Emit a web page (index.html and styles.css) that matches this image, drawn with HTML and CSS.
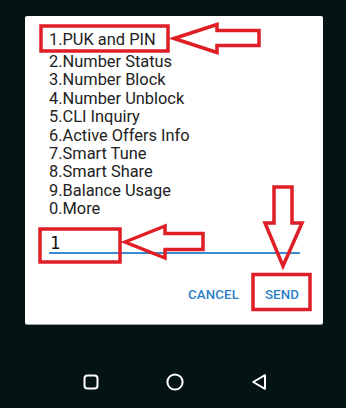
FILE: index.html
```html
<!DOCTYPE html>
<html>
<head>
<meta charset="utf-8">
<link rel="stylesheet" href="styles.css">
</head>
<body>
<div class="screen">
  <div class="dialog">
    <div class="menu">
      <div class="item first">1.PUK and PIN</div>
      <div class="item">2.Number Status</div>
      <div class="item">3.Number Block</div>
      <div class="item">4.Number Unblock</div>
      <div class="item">5.CLI Inquiry</div>
      <div class="item">6.Active Offers Info</div>
      <div class="item">7.Smart Tune</div>
      <div class="item">8.Smart Share</div>
      <div class="item">9.Balance Usage</div>
      <div class="item">0.More</div>
    </div>
    <div class="field"><span class="value">1</span></div>
    <div class="actions">
      <span class="btn">CANCEL</span>
      <span class="btn">SEND</span>
    </div>
  </div>
  <div class="navbar">
    <svg class="nav" width="16" height="16" viewBox="0 0 16 16"><rect x="1.5" y="1.5" width="13" height="13" rx="3" fill="none" stroke="#fff" stroke-width="2"/></svg>
    <svg class="nav" width="18" height="18" viewBox="0 0 18 18"><circle cx="9" cy="9" r="7.6" fill="none" stroke="#fff" stroke-width="2"/></svg>
    <svg class="nav" width="16" height="18" viewBox="0 0 16 18"><path d="M14 2.2 L2.2 9 L14 15.8 Z" fill="none" stroke="#fff" stroke-width="2" stroke-linejoin="round"/></svg>
  </div>
  <svg class="marks" width="346" height="408" viewBox="0 0 346 408">
    <g fill="none" stroke="#e01e26" stroke-width="3.5" stroke-linejoin="miter">
      <rect x="41" y="26" width="127" height="25"/>
      <path d="M174 38.5 L217 24.5 L217 30.5 L259 30.5 L259 45.5 L217 45.5 L217 52.5 Z"/>
      <rect x="40" y="229" width="80" height="33"/>
      <path d="M125 242 L165 226 L165 233.5 L203 233.5 L203 249.5 L165 249.5 L165 258 Z"/>
      <path d="M274 187 L292 187 L292 223 L302 223 L283 266 L265 223 L274 223 Z"/>
      <rect x="253" y="274.5" width="57" height="35"/>
    </g>
  </svg>
</div>
</body>
</html>
```
FILE: styles.css
```css
html, body {
  margin: 0;
  padding: 0;
}
body {
  background: #041313;
  font-family: Roboto, "Noto Sans", sans-serif;
}
.screen {
  position: relative;
  width: 346px;
  height: 408px;
  overflow: hidden;
  padding-top: 16px;
  box-sizing: border-box;
}
.dialog {
  margin-left: 25px;
  width: 298px;
  height: 308px;
  background: #ffffff;
  border-radius: 2px;
  box-shadow: 0 1px 0 #9a9e9e;
  box-sizing: border-box;
  padding: 15px 23px 0 24px;
  display: flex;
  flex-direction: column;
}
.menu {
  display: flex;
  flex-direction: column;
}
.item {
  font-size: 16.4px;
  line-height: 18.4px;
  color: #222222;
  white-space: nowrap;
}
.item.first {
  line-height: 18px;
  margin-bottom: 4px;
}
.field {
  margin-top: 16px;
  height: 17px;
  border-bottom: 2px solid #3a8bd2;
  display: flex;
  align-items: flex-end;
}
.value {
  font-family: "DejaVu Sans Mono", monospace;
  font-size: 17px;
  line-height: 17px;
  color: #111;
  padding-left: 1px;
}
.actions {
  margin-top: 33px;
  display: flex;
  justify-content: flex-end;
  gap: 26px;
  padding-right: 1px;
}
.btn {
  font-family: Roboto, sans-serif;
  font-weight: 500;
  font-size: 13.3px;
  line-height: 16px;
  color: #2e7fc8;
  letter-spacing: 0.1px;
}
.navbar {
  display: flex;
  justify-content: center;
  align-items: center;
  gap: 67px;
  margin-top: 49px;
  padding-left: 3px;
}
.nav {
  display: block;
}
.marks {
  position: absolute;
  left: 0;
  top: 0;
}
```
